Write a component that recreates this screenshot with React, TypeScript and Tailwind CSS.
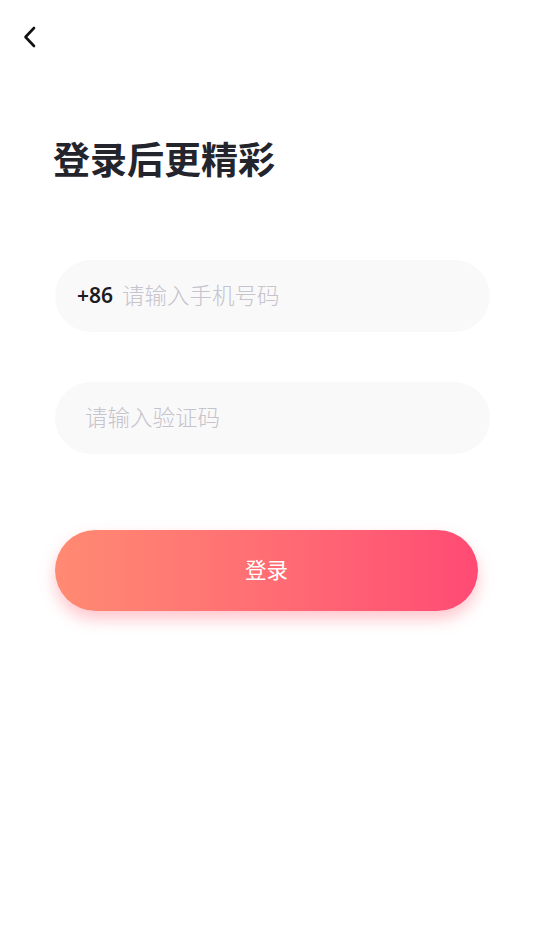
import React from "react";

export default function App() {
  return (
    <div
      className="w-[538px] h-[945px] bg-white relative"
      style={{ fontFamily: '"Noto Sans", "Noto Sans CJK SC", sans-serif' }}
    >
      <div className="h-[75px] flex items-center pl-[22px] pb-[2px]">
        <svg width="16" height="22" viewBox="0 0 16 22" fill="none">
          <path d="M12 2 L3.5 11 L12 20" stroke="#111" strokeWidth="2.6" strokeLinecap="round" strokeLinejoin="round" />
        </svg>
      </div>
      <h1 className="ml-[53px] mt-[60px] text-[37px] leading-[50px] font-bold text-[#24242c] tracking-[0px]">
        登录后更精彩
      </h1>
      <div className="ml-[55px] mt-[75px] w-[435px] h-[72px] rounded-full bg-[#f9f9fa] flex items-center pl-[22px]">
        <span className="text-[21px] font-semibold text-[#1c1c22] mr-[9px]">+86</span>
        <span className="text-[22.5px] font-light text-[#c6c3cc]">请输入手机号码</span>
      </div>
      <div className="ml-[55px] mt-[50px] w-[435px] h-[72px] rounded-full bg-[#f9f9fa] flex items-center pl-[30px]">
        <span className="text-[22.5px] font-light text-[#c6c3cc]">请输入验证码</span>
      </div>
      <div className="ml-[55px] mt-[76px] w-[423px] h-[81px] rounded-full bg-gradient-to-r from-[#ff8a72] to-[#ff4a74] shadow-[0_8px_16px_rgba(255,90,110,0.35)] flex items-center justify-center">
        <span className="text-[21.5px] text-white">登录</span>
      </div>
    </div>
  );
}
